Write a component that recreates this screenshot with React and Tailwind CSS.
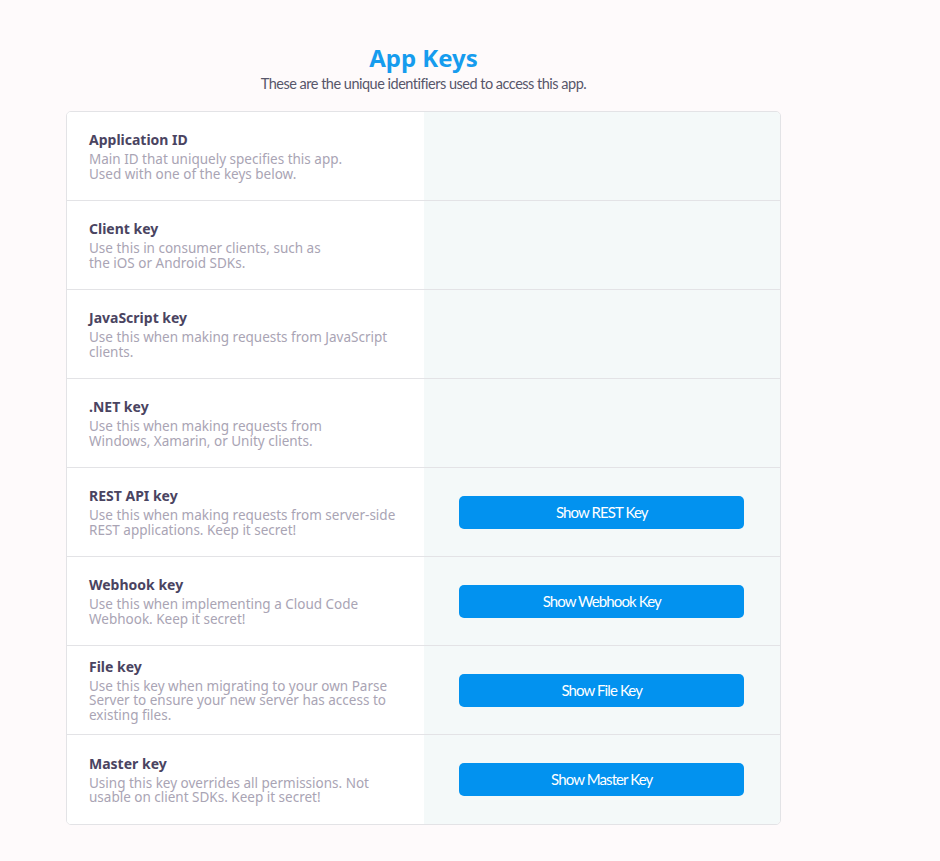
import React from 'react';

const rows = [
  { label: 'Application ID', desc: ['Main ID that uniquely specifies this app.', 'Used with one of the keys below.'] },
  { label: 'Client key', desc: ['Use this in consumer clients, such as', 'the iOS or Android SDKs.'] },
  { label: 'JavaScript key', desc: ['Use this when making requests from JavaScript', 'clients.'] },
  { label: '.NET key', desc: ['Use this when making requests from', 'Windows, Xamarin, or Unity clients.'] },
  { label: 'REST API key', desc: ['Use this when making requests from server-side', 'REST applications. Keep it secret!'], button: 'Show REST Key' },
  { label: 'Webhook key', desc: ['Use this when implementing a Cloud Code', 'Webhook. Keep it secret!'], button: 'Show Webhook Key' },
  { label: 'File key', desc: ['Use this key when migrating to your own Parse', 'Server to ensure your new server has access to', 'existing files.'], button: 'Show File Key' },
  { label: 'Master key', desc: ['Using this key overrides all permissions. Not', 'usable on client SDKs. Keep it secret!'], button: 'Show Master Key' },
];

function KeyRow({ row, last }) {
  return (
    <div className={'grid grid-cols-2 h-[89px] ' + (last ? '' : 'border-b border-[#e3e3e6]')}>
      <div className="bg-white pl-[22px] pr-4 flex flex-col justify-center">
        <div className="text-[14px] leading-[18px] font-bold text-[#4a4461]">{row.label}</div>
        <div className="mt-[3px] text-[13.5px] leading-[14.5px] text-[#a9a4b4] whitespace-nowrap">
          {row.desc.map((d, i) => (
            <div key={i}>{d}</div>
          ))}
        </div>
      </div>
      <div className="bg-[#f4f9f9] flex items-center justify-center">
        {row.button && (
          <button className="w-[285px] h-[33px] rounded-[5px] bg-[#0292ef] text-white text-[15px] tracking-[-0.9px] font-['Lato',sans-serif]">
            {row.button}
          </button>
        )}
      </div>
    </div>
  );
}

export default function App() {
  return (
    <div className="min-h-[861px] bg-[#fefafb] font-['Noto_Sans',sans-serif]">
      <div className="w-[715px] ml-[66px] pt-[42px] pb-9">
        <div className="text-center">
          <h1 className="text-[24px] leading-[32px] font-bold text-[#169cee]">App Keys</h1>
          <p className="mt-[1px] text-[14.5px] leading-[18px] tracking-[-0.5px] text-[#57566a] font-['Lato',sans-serif]">
            These are the unique identifiers used to access this app.
          </p>
        </div>
        <div className="mt-[18px] border border-[#e3e3e6] rounded-[5px] overflow-hidden">
          {rows.map((r, i) => (
            <KeyRow key={r.label} row={r} last={i === rows.length - 1} />
          ))}
        </div>
      </div>
    </div>
  );
}
